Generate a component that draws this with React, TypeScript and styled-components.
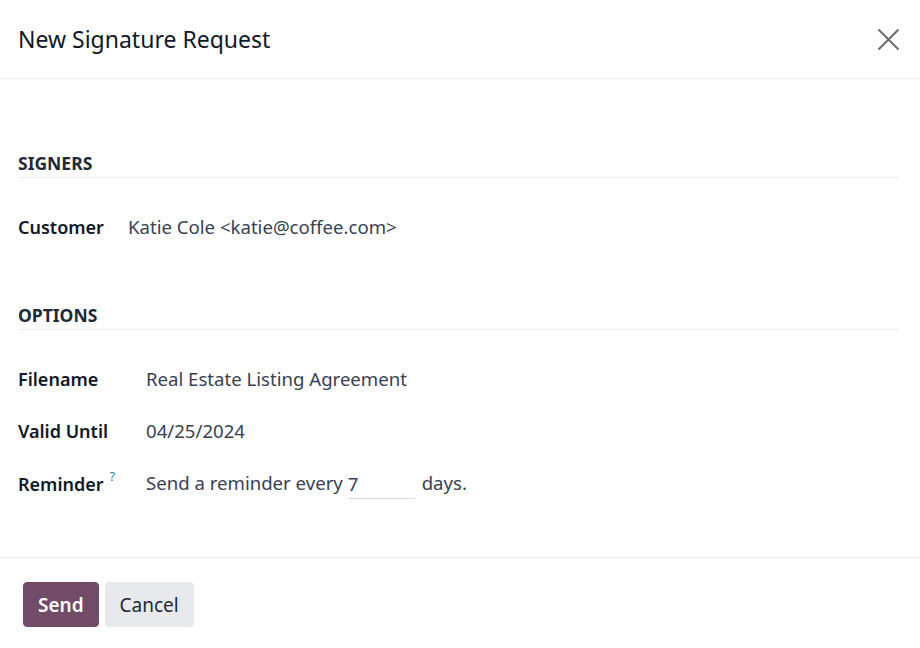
import React from "react";
import styled, { createGlobalStyle } from "styled-components";

const GlobalStyle = createGlobalStyle`
  html, body {
    margin: 0;
    padding: 0;
    background: #ffffff;
  }
  body {
    font-family: "Noto Sans", "Open Sans", sans-serif;
    color: #374151;
  }
  * {
    box-sizing: border-box;
  }
`;

const Dialog = styled.div`
  width: 920px;
  height: 648px;
  display: flex;
  flex-direction: column;
  background: #fff;
`;

const Header = styled.header`
  height: 79px;
  display: flex;
  align-items: center;
  justify-content: space-between;
  padding: 0 20px 0 18px;
  border-bottom: 1px solid #e7e9ed;
`;

const Title = styled.h4`
  margin: 0;
  font-size: 23px;
  font-weight: 400;
  color: #111827;
`;

const CloseButton = styled.button`
  border: 0;
  background: transparent;
  padding: 0;
  width: 23px;
  height: 23px;
  display: flex;
  align-items: center;
  justify-content: center;
  color: #6b6b6b;
  cursor: pointer;
`;

const Body = styled.main`
  flex: 1;
  padding: 72px 22px 0 18px;
`;

const Section = styled.section`
  margin-bottom: 62px;
  &:last-child {
    margin-bottom: 0;
  }
`;

const SectionTitle = styled.div`
  font-size: 17.5px;
  line-height: 24px;
  font-weight: 700;
  text-transform: uppercase;
  color: #1f2937;
  padding-bottom: 2px;
  border-bottom: 1px solid #e7e9ed;
  margin-bottom: 35px;
`;

const FieldRow = styled.div<{ $labelWidth: number }>`
  display: grid;
  grid-template-columns: ${(p) => p.$labelWidth}px 1fr;
  align-items: center;
  height: 28px;
  font-size: 18.6px;
  line-height: 28px;
  margin-bottom: 24px;
  &:last-child {
    margin-bottom: 0;
  }
`;

const Label = styled.label`
  font-size: 18px;
  font-weight: 600;
  color: #111827;
  white-space: nowrap;
`;

const Help = styled.sup`
  color: #2f86b8;
  font-size: 13px;
  font-weight: 400;
  line-height: 0;
  margin-left: 6px;
  position: relative;
  top: -3px;
`;

const Value = styled.span`
  color: #374151;
  white-space: nowrap;
`;

const DaysInput = styled.span`
  display: inline-block;
  width: 67px;
  margin: 0 7px 0 0;
  border-bottom: 1px solid #d8dadd;
  line-height: 28px;
  height: 30px;
  vertical-align: top;
  padding-top: 1px;
`;

const Footer = styled.footer`
  height: 91px;
  border-top: 1px solid #e7e9ed;
  display: flex;
  align-items: flex-start;
  gap: 6px;
  padding: 24px 23px 0;
`;

const Button = styled.button<{ $primary?: boolean }>`
  height: 45px;
  padding: 0 14px;
  border-radius: 4px;
  font-family: inherit;
  font-size: 19px;
  font-weight: ${(p) => (p.$primary ? 600 : 400)};
  border: 1px solid ${(p) => (p.$primary ? "#714b67" : "#e7e9ed")};
  background: ${(p) => (p.$primary ? "#714b67" : "#e7e9ed")};
  color: ${(p) => (p.$primary ? "#ffffff" : "#1f2937")};
  cursor: pointer;
`;

const CloseIcon = () => (
  <svg width="23" height="23" viewBox="0 0 23 23" fill="none" stroke="currentColor" strokeWidth="2">
    <path d="M1.5 1.5 L21.5 21.5 M21.5 1.5 L1.5 21.5" />
  </svg>
);

export default function App() {
  return (
    <>
      <GlobalStyle />
      <Dialog>
        <Header>
          <Title>New Signature Request</Title>
          <CloseButton aria-label="Close">
            <CloseIcon />
          </CloseButton>
        </Header>
        <Body>
          <Section>
            <SectionTitle>Signers</SectionTitle>
            <FieldRow $labelWidth={110}>
              <Label>Customer</Label>
              <Value>Katie Cole &lt;katie@coffee.com&gt;</Value>
            </FieldRow>
          </Section>
          <Section>
            <SectionTitle>Options</SectionTitle>
            <FieldRow $labelWidth={128}>
              <Label>Filename</Label>
              <Value>Real Estate Listing Agreement</Value>
            </FieldRow>
            <FieldRow $labelWidth={128}>
              <Label>Valid Until</Label>
              <Value>04/25/2024</Value>
            </FieldRow>
            <FieldRow $labelWidth={128}>
              <Label>
                Reminder<Help>?</Help>
              </Label>
              <Value>
                Send a reminder every <DaysInput>7</DaysInput>days.
              </Value>
            </FieldRow>
          </Section>
        </Body>
        <Footer>
          <Button $primary>Send</Button>
          <Button>Cancel</Button>
        </Footer>
      </Dialog>
    </>
  );
}
